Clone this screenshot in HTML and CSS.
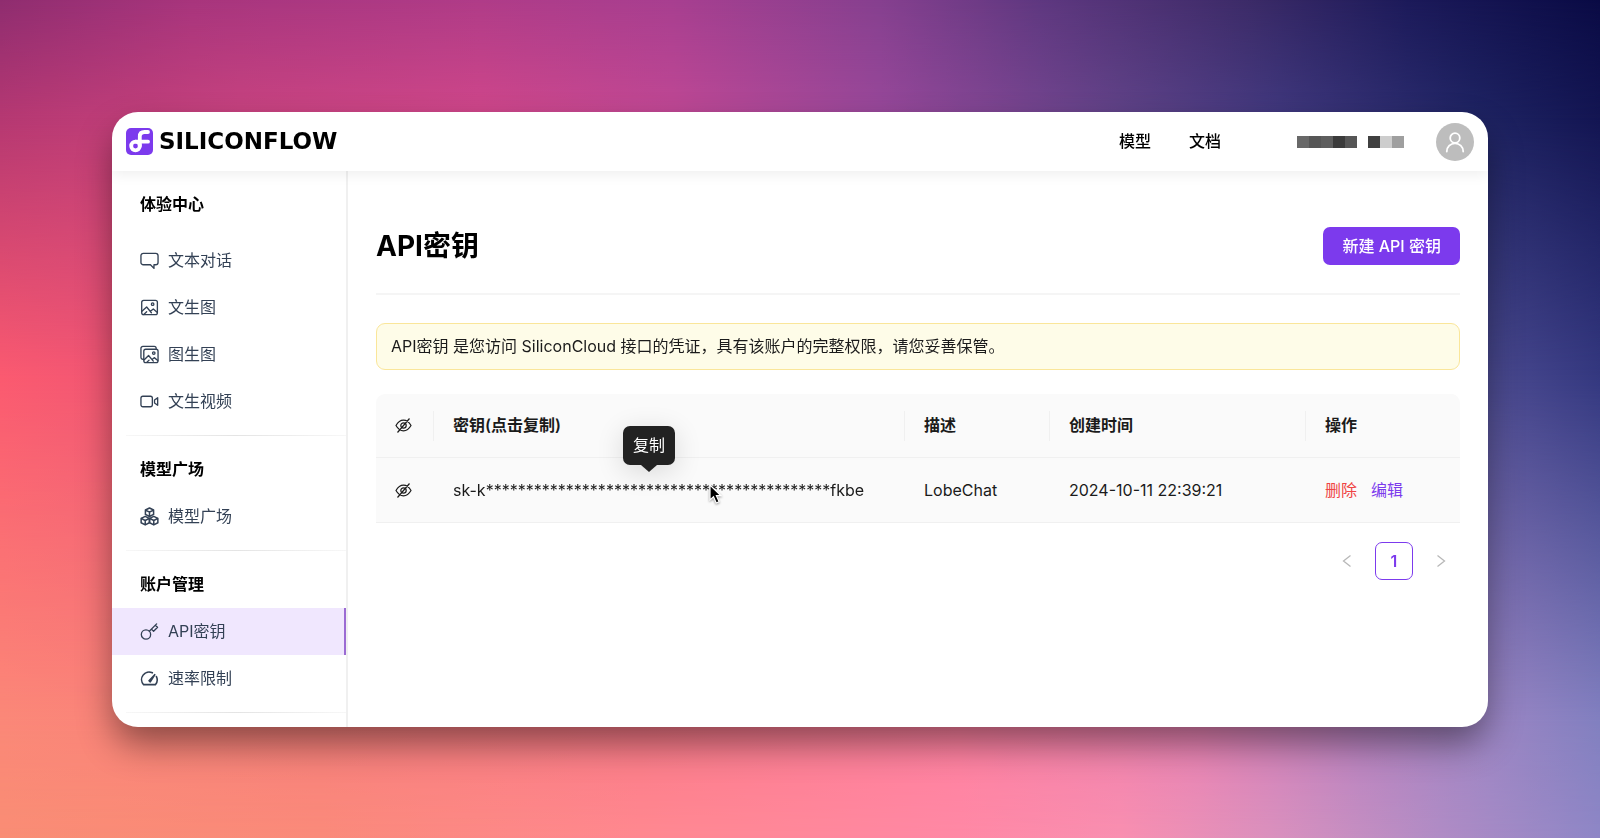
FILE: index.html
```html
<!DOCTYPE html>
<html lang="zh-CN">

<head>
    <meta charset="UTF-8">
    <meta name="viewport" content="width=device-width, initial-scale=1.0">
    <title>API密钥 - SiliconFlow</title>
    <link rel="stylesheet" href="styles.css">
</head>

<body>
    <!-- Colour rows of the wallpaper, each one fades into the next -->
    <div class="wallpaper">
        <div class="row row1"></div>
        <div class="row row2"></div>
        <div class="row row3"></div>
        <div class="row row4"></div>
        <div class="row row5"></div>
    </div>

    <div class="window">
        <header class="topbar">
            <a class="logo" href="#">
                <svg width="27" height="27" viewBox="0 0 27 27">
                    <rect width="27" height="27" rx="5" fill="#7c3aed" />
                    <g fill="none" stroke="#fff" stroke-width="3.8" stroke-linecap="round" stroke-linejoin="round">
                        <circle cx="9.500" cy="18" r="4.300" />
                        <path d="M13.800 18V8.500Q13.800 4 18.500 4H22" />
                        <path d="M9.500 13.700H22" />
                    </g>
                </svg>
                <span>SILICONFLOW</span>
            </a>
            <nav class="topnav">
                <a href="#">模型</a>
                <a href="#">文档</a>
            </nav>
            <div class="username">
                <i class="b1"></i><i class="b2"></i><i class="b3"></i><i class="b4"></i><i class="b2"></i>
                <i class="b5"></i><i class="b6"></i><i class="b7"></i>
            </div>
            <button class="avatar" aria-label="账户">
                <svg width="22" height="22" viewBox="0 0 22 22" fill="none" stroke="#fff" stroke-width="1.8" stroke-linecap="round">
                    <circle cx="11" cy="7" r="4.800" />
                    <path d="M2.800 20.500a8.200 8.200 0 0 1 16.400 0" />
                </svg>
            </button>
        </header>

        <div class="body">
            <!-- Sidebar menu -->
            <aside class="sidebar">
                <h2 class="first">体验中心</h2>
                <a class="item" href="#">
                    <svg class="icon" viewBox="0 0 20 20">
                        <path d="M3.500 2.500h13a2.500 2.500 0 0 1 2.500 2.500v7a2.500 2.500 0 0 1-2.500 2.500h-1.800v3.800l-3.700-3.800H3.500A2.500 2.500 0 0 1 1 12V5a2.500 2.500 0 0 1 2.500-2.500z" />
                    </svg>
                    文本对话
                </a>
                <a class="item" href="#">
                    <svg class="icon" viewBox="0 0 20 20">
                        <rect x="1.800" y="2.500" width="16.500" height="15" rx="2" />
                        <circle cx="13.300" cy="6.500" r="1.300" />
                        <path d="M2 14l5-4.500 5 6M11 14l3-2.500 4 3.500M4 17.300l3-2.800" />
                    </svg>
                    文生图
                </a>
                <a class="item" href="#">
                    <svg class="icon" viewBox="0 0 20 20">
                        <path d="M3.800 15H3a2 2 0 0 1-2-2V3.500a2 2 0 0 1 2-2h12a2 2 0 0 1 2 2V4" />
                        <rect x="4" y="4.500" width="15" height="14" rx="2" />
                        <circle cx="14.500" cy="8.500" r="1.300" />
                        <path d="M4.500 15.500l4.500-4.500 5 6M13 15l2-1.700 3.700 3M7 18.300l2.500-2.300" />
                    </svg>
                    图生图
                </a>
                <a class="item" href="#">
                    <svg class="icon" viewBox="0 0 20 20">
                        <rect x="1" y="4.500" width="12" height="11" rx="2" />
                        <path d="M15.300 8.500L18.600 6v8l-3.300-2.500z" />
                    </svg>
                    文生视频
                </a>
                <hr>
                <h2>模型广场</h2>
                <a class="item" href="#">
                    <svg class="icon cubes" viewBox="0 0 20 20">
                        <path d="M10 1l4.300 2.200v4.600L10 10 5.700 7.800V3.200zM5.700 3.200L10 5.400l4.300-2.200M10 5.400V10" />
                        <path d="M5.500 9.800l4.300 2.200v4.600l-4.300 2.200-4.300-2.200V12zM1.200 12l4.300 2.200L9.800 12M5.500 14.200v4.600" />
                        <path d="M14.500 9.800l4.300 2.200v4.600l-4.300 2.200-4.300-2.200V12zM10.200 12l4.300 2.200 4.300-2.200M14.500 14.200v4.600" />
                    </svg>
                    模型广场
                </a>
                <hr>
                <h2>账户管理</h2>
                <a class="item active" href="#">
                    <svg class="icon" viewBox="0 0 20 20">
                        <circle cx="6.300" cy="13.200" r="4.900" />
                        <path d="M9.800 9.700L17.500 2M12 7.500l2.300 2.300 4.200-4.300L16 3.500" />
                    </svg>
                    API密钥
                </a>
                <a class="item" href="#">
                    <svg class="icon bold" viewBox="0 0 20 20">
                        <path d="M13 4A7.900 7.900 0 0 0 3.800 16.500h12.400a7.900 7.900 0 0 0 1.100-8.500" />
                        <path d="M9.500 12.300l6-6.300-4.700 7.500z" />
                    </svg>
                    速率限制
                </a>
                <hr>
            </aside>

            <!-- API key list -->
            <main class="content">
                <div class="heading">
                    <h1>API密钥</h1>
                    <button class="create">新建 API 密钥</button>
                </div>
                <p class="notice">API密钥 是您访问 SiliconCloud 接口的凭证，具有该账户的完整权限，请您妥善保管。</p>
                <table class="keys">
                    <colgroup>
                        <col class="col-eye">
                        <col>
                        <col class="col-desc">
                        <col class="col-time">
                        <col class="col-action">
                    </colgroup>
                    <thead>
                        <tr>
                            <th>
                                <button class="eye" aria-label="显示全部">
                                    <svg width="17" height="17" viewBox="0 0 17 17">
                                        <path d="M1 8.500Q4 3.200 8.500 3.200T16 8.500Q13 13.800 8.500 13.800T1 8.500zM14.500 1.500l-12 14" />
                                        <circle cx="8.500" cy="8.500" r="2.700" />
                                    </svg>
                                </button>
                            </th>
                            <th>密钥(点击复制)</th>
                            <th>描述</th>
                            <th>创建时间</th>
                            <th>操作</th>
                        </tr>
                    </thead>
                    <tbody>
                        <tr>
                            <td>
                                <button class="eye" aria-label="显示">
                                    <svg width="17" height="17" viewBox="0 0 17 17">
                                        <path d="M1 8.500Q4 3.200 8.500 3.200T16 8.500Q13 13.800 8.500 13.800T1 8.500zM14.500 1.500l-12 14" />
                                        <circle cx="8.500" cy="8.500" r="2.700" />
                                    </svg>
                                </button>
                            </td>
                            <td>
                                <button class="copy">sk-k*******************************************fkbe
                                    <span class="tooltip">复制</span>
                                    <svg class="cursor" width="16" height="22" viewBox="0 0 16 22">
                                        <path d="M2 1v15l3.500-3.200L8.200 19l2.900-1.300-2.700-6H13z" fill="#000" stroke="#fff" stroke-width="1.200" />
                                    </svg>
                                </button>
                            </td>
                            <td>LobeChat</td>
                            <td>2024-10-11 22:39:21</td>
                            <td>
                                <div class="actions">
                                    <a class="delete" href="#">删除</a>
                                    <a class="edit" href="#">编辑</a>
                                </div>
                            </td>
                        </tr>
                    </tbody>
                </table>
                <nav class="pages">
                    <button aria-label="上一页" disabled>
                        <svg width="12" height="14" viewBox="0 0 12 14"><path d="M9.500 1.500L2.500 7l7 5.500" /></svg>
                    </button>
                    <button class="current">1</button>
                    <button aria-label="下一页" disabled>
                        <svg width="12" height="14" viewBox="0 0 12 14"><path d="M2.500 1.500L9.500 7l-7 5.500" /></svg>
                    </button>
                </nav>
            </main>
        </div>
    </div>
</body>

</html>
```

FILE: styles.css
```css
* {
    box-sizing: border-box;
}

body {
    margin: 0;
    padding: 112px;
    min-height: 100vh;
    font-family: Inter, "Noto Sans CJK SC", sans-serif;
    font-size: 16px;
    line-height: 25px;
    color: #1b1b1b;
}

a {
    color: inherit;
    text-decoration: none;
}

button {
    margin: 0;
    padding: 0;
    border: 0;
    background: none;
    font: inherit;
    color: inherit;
    cursor: pointer;
}

/* Wallpaper */
.wallpaper {
    position: fixed;
    inset: 0;
    z-index: -1;
}

.row {
    position: absolute;
    inset: 0;
}

.row1 {
    background: linear-gradient(to right, #8f2d70, #a8357d 12%, #b03c88 30%, #a83f90 42%, #86408f 55%, #5f3880 65%, #3c2b68 78%, #1c1a5a 88%, #0a0b45);
}

.row2 {
    background: linear-gradient(to right, #b53872, #c8437f 15%, #d0478a 30%, #c04894 42%, #98489a 55%, #604388 70%, #40387e 80%, #1f2463 92%, #131552);
    mask-image: linear-gradient(to bottom, transparent, #000 14%);
}

.row3 {
    background: linear-gradient(to right, #fb5a70, #e0507a 20%, #a04090 60%, #4b4a90 93%, #343880);
    mask-image: linear-gradient(to bottom, transparent 14%, #000 45%);
}

.row4 {
    background: linear-gradient(to right, #fb8878, #f8807c 20%, #fb7a88 40%, #ff80a0 60%, #e882b4 75%, #b882c0 85%, #9c86c4 93%, #8280c0);
    mask-image: linear-gradient(to bottom, transparent 45%, #000 86%);
}

.row5 {
    background: linear-gradient(to right, #f98d74, #fa8a7a 20%, #ff8890 40%, #ff88a5 60%, #f98fb0 70%, #d890be 80%, #b08cc5 90%, #8e86c6);
    mask-image: linear-gradient(to bottom, transparent 86%, #000);
}

/* App window */
.window {
    background-color: #fff;
    border-radius: 26px;
    overflow: hidden;
    box-shadow: 0 18px 36px -2px rgba(0, 0, 0, 0.45);
}

.topbar {
    position: relative;
    display: flex;
    align-items: center;
    height: 59px;
    padding: 0 14px;
    color: #000;
    box-shadow: 0 2px 14px rgba(0, 0, 0, 0.08);
}

.logo {
    display: flex;
    align-items: center;
    gap: 6px;
    margin-right: auto;
    font-family: "DejaVu Sans", sans-serif;
    font-size: 23px;
    font-weight: bold;
}

.topnav {
    display: flex;
    gap: 38px;
    font-weight: 500;
}

.username {
    display: flex;
    margin: 0 32px 0 76px;
}

.username i {
    width: 12px;
    height: 12px;
}

.username .b1 { background-color: #686868; }
.username .b2 { background-color: #565656; }
.username .b3 { background-color: #5e5e5e; }
.username .b4 { background-color: #3b3b3b; }
.username .b5 { background-color: #404040; margin-left: 11px; }
.username .b6 { background-color: #cdcdcd; }
.username .b7 { background-color: #9f9f9f; }

.avatar {
    display: flex;
    align-items: center;
    justify-content: center;
    width: 38px;
    height: 38px;
    border-radius: 50%;
    background-color: #bdbdbd;
}

.body {
    display: flex;
}

/* Sidebar menu */
.sidebar {
    flex: none;
    width: 236px;
    padding-bottom: 14px;
    border-right: 2px solid #f0f0f0;
}

.sidebar h2 {
    margin: 0;
    padding: 0 28px;
    font-size: 16px;
    font-weight: 600;
    line-height: 47px;
    color: #000;
}

.sidebar .first {
    margin: 10px 0 9px;
}

.sidebar hr {
    height: 1px;
    margin: 10px 0 10px 14px;
    border: 0;
    background: linear-gradient(to right, #f7f7f7, #e4e4e4 50%, #f7f7f7);
}

.sidebar hr:last-child {
    margin-bottom: 0;
}

.item {
    display: flex;
    align-items: center;
    gap: 9px;
    height: 47px;
    padding: 0 28px;
    color: #334155;
}

.active {
    background-color: #f0e7fe;
    border-right: 2px solid #9b6bd3;
}

.icon {
    flex: none;
    width: 19px;
    height: 19px;
    fill: none;
    stroke: #334155;
    stroke-width: 1.4;
    stroke-linejoin: round;
    stroke-linecap: round;
}

.cubes {
    stroke-width: 1.6;
}

.bold {
    stroke-width: 1.7;
}

/* Main content */
.content {
    flex: 1;
    min-width: 0;
    padding: 28px;
}

.heading {
    display: flex;
    align-items: center;
    justify-content: space-between;
    padding: 28px 0;
    border-bottom: 2px solid #f5f5f5;
}

h1 {
    margin: 0;
    font-size: 28px;
    line-height: 38px;
    color: #000;
}

.create {
    height: 38px;
    padding: 0 19px;
    border-radius: 7px;
    background-color: #7c3aed;
    color: #fff;
    font-weight: 500;
}

.notice {
    margin: 28px 0 24px;
    padding: 10px 14px;
    border: 1px solid #fae69a;
    border-radius: 9px;
    background-color: #fefce8;
}

.keys {
    width: 100%;
    table-layout: fixed;
    border-collapse: separate;
    border-spacing: 0;
}

.col-eye {
    width: 58px;
}

.col-desc {
    width: 145px;
}

.col-time {
    width: 256px;
}

.col-action {
    width: 154px;
}

.keys th,
.keys td {
    position: relative;
    height: 64px;
    padding: 0 19px;
    text-align: left;
    background-color: #fafafa;
    border-bottom: 1px solid #f0f0f0;
}

.keys td {
    height: 65px;
}

.keys th {
    font-weight: 600;
}

.keys th:first-child {
    border-top-left-radius: 9px;
}

.keys th:last-child {
    border-top-right-radius: 9px;
}

/* thin line between the header cells */
.keys th:not(:last-child)::after {
    content: "";
    position: absolute;
    right: 0;
    top: 17px;
    width: 1px;
    height: 30px;
    background-color: #f0f0f0;
}

.eye {
    display: block;
}

.eye svg {
    display: block;
    fill: none;
    stroke: #1b1b1b;
    stroke-width: 1.2;
}

.copy {
    position: relative;
}

.tooltip {
    position: absolute;
    left: 196px;
    bottom: 38px;
    transform: translateX(-50%);
    padding: 7px 10px;
    border-radius: 7px;
    background-color: #222;
    color: #fff;
    white-space: nowrap;
    box-shadow: 0 6px 28px rgba(0, 0, 0, 0.14);
}

.tooltip::after {
    content: "";
    position: absolute;
    left: 50%;
    top: 100%;
    margin-left: -8px;
    border: 8px solid transparent;
    border-top: 7px solid #222;
    border-bottom: 0;
}

.cursor {
    position: absolute;
    left: 255px;
    top: 6px;
    filter: drop-shadow(0 1px 1px rgba(0, 0, 0, 0.4));
}

.actions {
    display: flex;
    gap: 14px;
}

.delete {
    color: #ef4444;
}

.edit {
    color: #7c3aed;
}

/* Pagination */
.pages {
    display: flex;
    justify-content: flex-end;
    gap: 9px;
    margin-top: 19px;
}

.pages button {
    display: flex;
    align-items: center;
    justify-content: center;
    width: 38px;
    height: 38px;
    border-radius: 7px;
}

.pages svg {
    fill: none;
    stroke: #b8b8b8;
    stroke-width: 1.3;
}

.pages .current {
    border: 1px solid #7c3aed;
    color: #7c3aed;
    font-weight: 600;
}
```
